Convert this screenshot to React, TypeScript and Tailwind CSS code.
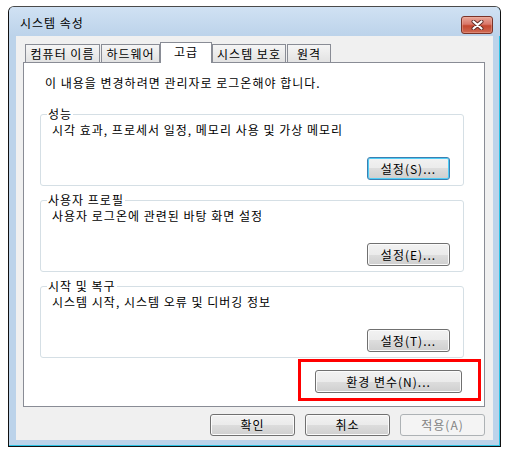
import type { ReactNode } from 'react'

const btnBase =
  'flex items-center justify-center rounded-[3px] border text-[12px] leading-[16px]'
const btnNormal =
  'border-[#707070] bg-[linear-gradient(to_bottom,#f2f2f2_0%,#ebebeb_50%,#dddddd_50%,#cfcfcf_100%)] shadow-[inset_0_0_0_1px_#fbfbfb]'
const btnFocused =
  'border-[#3c7fb1] bg-[linear-gradient(to_bottom,#f2f2f2_0%,#ebebeb_50%,#dddddd_50%,#cfcfcf_100%)] shadow-[inset_0_0_0_1px_#4fcdf6]'
const btnDisabled = 'border-[#adb2b5] bg-[#f4f4f4] text-[#838383]'

function Button({
  children,
  className,
  variant = 'normal',
}: {
  children: ReactNode
  className: string
  variant?: 'normal' | 'focused' | 'disabled'
}) {
  const look = variant === 'focused' ? btnFocused : variant === 'disabled' ? btnDisabled : btnNormal
  return <div className={`${btnBase} ${look} ${className}`}>{children}</div>
}

function Tab({ children, className }: { children: ReactNode; className: string }) {
  return (
    <div
      className={`flex h-[18px] items-center justify-center border border-b-0 border-[#898c95] bg-[linear-gradient(to_bottom,#f5f5f5,#e2e2e2)] leading-[16px] ${className}`}
    >
      {children}
    </div>
  )
}

function Group({
  label,
  text,
  button,
  focused,
  className,
}: {
  label: string
  text: string
  button: string
  focused?: boolean
  className: string
}) {
  return (
    <fieldset className={`ml-[16px] mr-[20px] rounded-[3px] border border-[#d5dfe5] pb-[5px] ${className}`}>
      <legend className="ml-[6px] px-[1px] leading-[16px]">{label}</legend>
      <div className="pl-[11px] leading-[16px]">{text}</div>
      <div className="mt-[19px] flex justify-end pr-[13px]">
        <Button className="h-[23px] w-[83px]" variant={focused ? 'focused' : 'normal'}>
          {button}
        </Button>
      </div>
    </fieldset>
  )
}

export default function App() {
  return (
    <div className="min-h-[457px] w-[513px] bg-white pl-[8px] pt-[6px] font-['Noto_Sans_CJK_KR','Noto_Sans',sans-serif] text-[12px] tracking-[1px] text-black">
      <div className="flex h-[441px] w-[493px] flex-col rounded-t-[6px] border border-[#111] border-t-[#4a4a4a] bg-[#bcd3ea] shadow-[inset_-1px_-1px_0_#2cc2e4]">
        {/* title bar */}
        <div className="flex h-[29px] shrink-0 items-start rounded-t-[5px] bg-[linear-gradient(to_bottom,#d0e1f3,#bcd3ea)]">
          <span className="ml-[11px] mt-[8px] leading-[16px]">시스템 속성</span>
          <div className="ml-auto mr-[7px] mt-[9px] flex h-[18px] w-[32px] items-center justify-center rounded-[3px] border border-[#7a3328] bg-[linear-gradient(to_bottom,#e9a698_0%,#d9776a_45%,#c4472f_55%,#d06a54_100%)] shadow-[inset_0_0_0_1px_#f0b8aa66]">
            <svg width="13" height="10" viewBox="0 0 13 10">
              <path d="M2.5 1.5 L10.5 8.5 M10.5 1.5 L2.5 8.5" stroke="#5e2a24" strokeWidth="4" strokeLinecap="round" />
              <path d="M2.5 1.5 L10.5 8.5 M10.5 1.5 L2.5 8.5" stroke="#ffffff" strokeWidth="2.2" strokeLinecap="round" />
            </svg>
          </div>
        </div>

        <div className="flex flex-1 px-[7px] pb-[6px]">
          <div className="flex h-[404px] w-[477px] flex-col bg-[#f0f0f0] pl-[7px] pr-[8px]">
            {/* tabs */}
            <div className="mt-[6px] flex h-[20px] items-end pl-[2px]">
              <Tab className="w-[75px]">컴퓨터 이름</Tab>
              <Tab className="ml-px w-[59px]">하드웨어</Tab>
              <div className="relative z-10 -mb-px flex h-[21px] w-[52px] justify-center border border-b-0 border-[#898c95] bg-white pt-[1px] leading-[16px]">
                고급
              </div>
              <Tab className="w-[74px]">시스템 보호</Tab>
              <Tab className="ml-px w-[44px]">원격</Tab>
            </div>

            {/* panel */}
            <div className="flex h-[345px] flex-col border border-[#898c95] bg-white">
              <p className="ml-[21px] mt-[12px] leading-[16px]">
                이 내용을 변경하려면 관리자로 로그온해야 합니다.
              </p>
              <Group
                className="mt-[15px]"
                label="성능"
                text="시각 효과, 프로세서 일정, 메모리 사용 및 가상 메모리"
                button="설정(S)..."
                focused
              />
              <Group
                className="mt-[6px]"
                label="사용자 프로필"
                text="사용자 로그온에 관련된 바탕 화면 설정"
                button="설정(E)..."
              />
              <Group
                className="mt-[6px]"
                label="시작 및 복구"
                text="시스템 시작, 시스템 오류 및 디버깅 정보"
                button="설정(T)..."
              />
              <div className="mr-[3px] mt-[1px] h-[42px] w-[183px] self-end border-[3px] border-[#ff0000] pl-[14px] pt-[8px]">
                <Button className="h-[23px] w-[147px]">환경 변수(N)...</Button>
              </div>
            </div>

            {/* dialog buttons */}
            <div className="mt-[7px] flex justify-end gap-[10px]">
              <Button className="h-[22px] w-[85px]">확인</Button>
              <Button className="h-[22px] w-[85px]">취소</Button>
              <Button className="h-[22px] w-[85px]" variant="disabled">
                적용(A)
              </Button>
            </div>
          </div>
        </div>
      </div>
    </div>
  )
}
